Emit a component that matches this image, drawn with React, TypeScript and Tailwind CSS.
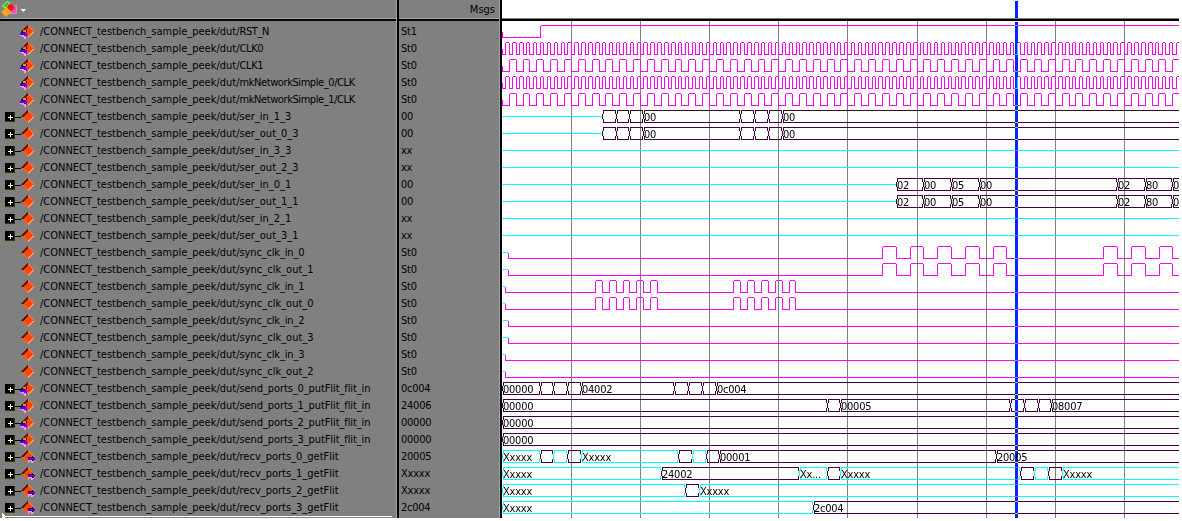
import React from "react";

type Kind = "in" | "out" | "net";
type Bus = { x: number; c: "k" | "c"; t?: string };
type Wave =
  | { type: "clock"; period: number }
  | { type: "reset" }
  | { type: "bit"; start: number; pulses: number[] }
  | { type: "bus"; lead?: boolean; segs: Bus[] };
type Signal = { name: string; value: string; kind: Kind; expand: boolean; wave: Wave };

const LEFT = 502;
const RIGHT = 1179;

const clock = (period: number): Wave => ({ type: "clock", period });
const bit = (start: number, pulses: number[] = []): Wave => ({ type: "bit", start, pulses });
const k = (x: number, t?: string): Bus => ({ x, c: "k", t });
const c = (x: number, t?: string): Bus => ({ x, c: "c", t });
const bus = (...segs: Bus[]): Wave => ({ type: "bus", segs });
const idle: Wave = { type: "bus", lead: true, segs: [] };

const ser1: Wave = {
  type: "bus",
  lead: true,
  segs: [k(602), k(616), k(629), k(643, "00"), k(740), k(754), k(768), k(782, "00")],
};
const ser0: Wave = {
  type: "bus",
  lead: true,
  segs: [k(896, "02"), k(923, "00"), k(951, "05"), k(979, "00"), k(1117, "02"), k(1145, "80"), k(1172, "0")],
};
const late = [882, 896, 910, 923, 937, 951, 965, 979, 993, 1006, 1103, 1117, 1131, 1145, 1159, 1172];
const early = [595, 602, 609, 616, 623, 629, 636, 643, 650, 657, 733, 740, 747, 754, 761, 768, 775, 782, 789, 795];

const sig = (name: string, value: string, kind: Kind, expand: boolean, wave: Wave): Signal => ({
  name, value, kind, expand, wave,
});

const signals: Signal[] = [
  sig("RST_N", "St1", "in", false, { type: "reset" }),
  sig("CLK0", "St0", "in", false, clock(6.912)),
  sig("CLK1", "St0", "in", false, clock(13.824)),
  sig("mkNetworkSimple_0/CLK", "St0", "in", false, clock(6.912)),
  sig("mkNetworkSimple_1/CLK", "St0", "in", false, clock(13.824)),
  sig("ser_in_1_3", "00", "net", true, ser1),
  sig("ser_out_0_3", "00", "net", true, ser1),
  sig("ser_in_3_3", "xx", "net", true, idle),
  sig("ser_out_2_3", "xx", "net", true, idle),
  sig("ser_in_0_1", "00", "net", true, ser0),
  sig("ser_out_1_1", "00", "net", true, ser0),
  sig("ser_in_2_1", "xx", "net", true, idle),
  sig("ser_out_3_1", "xx", "net", true, idle),
  sig("sync_clk_in_0", "St0", "net", false, bit(508, late)),
  sig("sync_clk_out_1", "St0", "net", false, bit(508, late)),
  sig("sync_clk_in_1", "St0", "net", false, bit(505, early)),
  sig("sync_clk_out_0", "St0", "net", false, bit(505, early)),
  sig("sync_clk_in_2", "St0", "net", false, bit(508)),
  sig("sync_clk_out_3", "St0", "net", false, bit(508)),
  sig("sync_clk_in_3", "St0", "net", false, bit(505)),
  sig("sync_clk_out_2", "St0", "net", false, bit(505)),
  sig("send_ports_0_putFlit_flit_in", "0c004", "in", true,
    bus(k(502, "00000"), k(540), k(553), k(567), k(581, "04002"), k(674), k(688), k(702), k(716, "0c004"))),
  sig("send_ports_1_putFlit_flit_in", "24006", "in", true,
    bus(k(502, "00000"), k(827), k(840, "00005"), k(1010), k(1024), k(1038), k(1051, "08007"))),
  sig("send_ports_2_putFlit_flit_in", "00000", "in", true, bus(k(502, "00000"))),
  sig("send_ports_3_putFlit_flit_in", "00000", "in", true, bus(k(502, "00000"))),
  sig("recv_ports_0_getFlit", "20005", "out", true,
    bus(c(502, "Xxxxx"), k(540), c(553), k(567), c(581, "Xxxxx"), k(678), c(692), k(706), k(719, "00001"), k(996, "20005"))),
  sig("recv_ports_1_getFlit", "Xxxxx", "out", true,
    bus(c(502, "Xxxxx"), k(661, "24002"), c(799, "Xx..."), k(827), c(840, "Xxxxx"), k(1020), c(1034), k(1048), c(1062, "Xxxxx"))),
  sig("recv_ports_2_getFlit", "Xxxxx", "out", true, bus(c(502, "Xxxxx"), k(685), c(699, "Xxxxx"))),
  sig("recv_ports_3_getFlit", "2c004", "out", true, bus(c(502, "Xxxxx"), k(813, "2c004"))),
];

const h = (x1: number, x2: number, y: number) => `M${x1} ${y}H${x2}V${y + 1}H${x1}Z`;
const v = (x: number, y1: number, y2: number) => `M${x} ${y1}H${x + 1}V${y2}H${x}Z`;

function pulsePath(from: number, pulses: number[], hi: number, lo: number) {
  let d = "";
  let x = from;
  for (let i = 0; i < pulses.length; i += 2) {
    const rise = pulses[i];
    const fall = Math.min(pulses[i + 1], RIGHT);
    d += h(x, rise + 1, lo) + v(rise, hi + 1, lo) + h(rise + 1, fall, hi);
    if (fall < RIGHT) d += v(fall, hi + 1, lo);
    x = fall;
  }
  return x < RIGHT ? d + h(x, RIGHT, lo) : d;
}

function clockEdges(period: number) {
  const edges: number[] = [];
  for (let n = -20; n < 100; n++) {
    const fall = 570.9 + n * period;
    const rise = Math.round(fall - period / 2);
    if (rise > LEFT && rise < RIGHT) edges.push(rise, Math.round(fall));
  }
  return edges;
}

function busPath(a: number, b: number, hi: number, lo: number) {
  let d = h(a + 1, b, hi) + h(a + 1, b, lo);
  d += v(a + 1, hi, hi + 4) + v(a, hi + 4, lo - 3) + v(a + 1, lo - 3, lo);
  if (b < RIGHT) d += v(b - 1, hi, hi + 4) + v(b, hi + 4, lo - 3) + v(b - 1, lo - 3, lo);
  return d;
}

const MAGENTA = "fill-[#ff00ff]";
const CYAN = "fill-[#00ffff]";
const DARK = "fill-[#400040]";

function Trace({ wave, row }: { wave: Wave; row: number }) {
  const hi = 25 + 17 * row;
  const mid = hi + 6;
  const lo = hi + 12;
  if (wave.type === "reset")
    return <path className={MAGENTA} d={v(LEFT, mid + 1, lo) + h(LEFT, 541, lo) + v(540, hi + 1, lo) + h(541, RIGHT, hi)} />;
  if (wave.type === "clock")
    return <path className={MAGENTA} d={v(LEFT, mid + 1, lo) + pulsePath(LEFT, clockEdges(wave.period), hi, lo)} />;
  if (wave.type === "bit")
    return (
      <g>
        <path className={CYAN} d={h(503, wave.start, mid)} />
        <path className={MAGENTA} d={v(wave.start, mid + 1, lo) + pulsePath(wave.start, wave.pulses, hi, lo)} />
      </g>
    );
  const { segs } = wave;
  return (
    <g>
      {wave.lead && <path className={CYAN} d={h(LEFT, segs.length ? segs[0].x : RIGHT, mid)} />}
      {segs.map((s, i) => (
        <path
          key={s.x}
          className={s.c === "k" ? DARK : CYAN}
          d={busPath(s.x, i + 1 < segs.length ? segs[i + 1].x : RIGHT, hi, lo)}
        />
      ))}
    </g>
  );
}

function SignalIcon({ kind }: { kind: Kind }) {
  return (
    <svg width="18" height="17" viewBox="0 0 18 17" className="shrink-0" shapeRendering="crispEdges">
      <path d="M9 1 1.5 8.5H5L9 4.5Z" fill="#5c1c0c" />
      <path d="M9 1 16 8.5H13L9 4.5Z" fill="#f07038" />
      <path d="M1.5 8.5 9 16V12.5L5 8.5Z" fill="#e86028" />
      <path d="M16 8.5 9 16V12.5L13 8.5Z" fill="#ff9a70" />
      <path d="M9 4 13.5 8.5 9 13 4.5 8.5Z" fill="#ff4408" />
      {kind === "in" && (
        <g transform="translate(1 0)">
          <path d="M2 7h5v2H6v2H1V9h1z" fill="#180828" />
          <path d="M3 7h3v2H3z" fill="#ff8030" />
          <path d="M0 10h6v3H0z" fill="#5000e0" />
          <path d="M5 9h1v1h1v4H6v1H4v-2h1z" fill="#6010f0" />
          <path d="M0 12h4v1H0zM2 13h4v1H2zM4 14h2v2H4z" fill="#ff90ff" />
        </g>
      )}
      {kind === "out" && (
        <g>
          <path d="M9 9h4V8h1v1h1v1h1v2h-1v1h-2v-1H9z" fill="#20082c" />
          <path d="M9 10h7v2H9z" fill="#5000e8" />
          <path d="M9 12h4v1H9zM12 13h3v1h-3zM12 14h2v1h-2zM15 12h1v1h-1z" fill="#ff98ff" />
        </g>
      )}
    </svg>
  );
}

function ExpandBox() {
  return (
    <svg width="16" height="17" viewBox="0 0 16 17" className="shrink-0" shapeRendering="crispEdges">
      <path d="M0 4h10v11H0z" fill="#8c7c5c" />
      <path d="M0 4h10v10H0z" fill="#000" />
      <path d="M0 13h10v1H0zM9 4h1v10H9z" fill="#3c3218" />
      <path d="M3 9h5v1H3zM5 7h1v5H5z" fill="#fff" />
      <path d="M10 9h6v1h-6z" fill="#000" />
    </svg>
  );
}

function ToolbarIcon() {
  return (
    <svg width="17" height="18" viewBox="0 0 17 18">
      <path d="M8.5 5.5h7v8h-7z" fill="#f050b8" stroke="#ff78c8" />
      <path d="M9 6h5v3H9z" fill="#a86858" />
      <path d="M1.5 6.5 6 1.5 9 3 4.5 8Z" fill="#20d010" stroke="#90ff70" />
      <circle cx="9.5" cy="7.5" r="3.2" fill="#ff1010" />
      <path d="M5.5 7 10.5 12 5 17 0 12Z" fill="#ffa820" />
    </svg>
  );
}

function nameTracking(name: string) {
  if (/CLK|RST/.test(name)) return "tracking-[-0.42px]";
  if (name.startsWith("sync_clk_in")) return "tracking-[-0.15px]";
  if (name.startsWith("send")) return "tracking-[-0.1px]";
  return "tracking-normal";
}

export default function App() {
  const grid = [571, 640, 709, 778, 847, 917, 986, 1055, 1124];
  return (
    <div className="h-[521px] w-[1182px] overflow-hidden bg-white">
      <div className="flex h-[518px] w-[1179px] whitespace-pre font-['DejaVu_Sans_Condensed','DejaVu_Sans',sans-serif] text-[11px] leading-[17px] text-black [font-stretch:condensed]">
        <div className="flex w-[399px] flex-col border-r-2 border-black bg-[#808080]">
          <div className="flex flex-1 flex-col border-r border-[#a0a0a0]">
            <div className="flex h-[21px] items-start border-b-2 border-black">
              <div className="flex h-[19px] w-full border-b border-[#a0a0a0] pl-px">
                <ToolbarIcon />
                <svg width="8" height="18" viewBox="0 0 8 18" className="ml-[2px]">
                  <path d="M.5 9h5.5L3.2 12Z" fill="#fff" />
                </svg>
              </div>
            </div>
            <div className="flex h-[495px] flex-col pt-[2px]">
              {signals.map((s) => (
                <div key={s.name} className="flex h-[17px] shrink-0 pl-[5px]">
                  {s.expand ? <ExpandBox /> : <span className="w-4" />}
                  <span className="-ml-[2px] flex">
                    <SignalIcon kind={s.kind} />
                  </span>
                  <span className="ml-[3px]">/CONNECT_testbench_sample_peek/dut/</span>
                  <span className={nameTracking(s.name)}>{s.name}</span>
                </div>
              ))}
            </div>
            <svg width="396" height="6" viewBox="0 0 396 6" className="-mt-[4px]" shapeRendering="crispEdges">
              <path d="M2 1h1v1h1v1h1v1h387v1H5v1H2z" fill="#fff" />
            </svg>
          </div>
        </div>
        <div className="flex w-[103px] flex-col border-r-2 border-black bg-[#808080]">
          <div className="flex flex-1 flex-col border-r border-[#a0a0a0]">
            <div className="h-[21px] border-b-2 border-black">
              <div className="h-[19px] border-b border-[#a0a0a0] pt-px pr-[4px] text-right">Msgs</div>
            </div>
            <div className="flex flex-col pt-[2px] pl-[2px] tracking-[-0.24px]">
              {signals.map((s) => (
                <div key={s.name} className="h-[17px]">{s.value}</div>
              ))}
            </div>
          </div>
        </div>
        <div className="flex w-[677px] flex-col">
          <div className="h-[21px] border-b-2 border-black">
            <div className="h-[19px] border-b border-[#808080] pt-px">
              <div className="ml-[513px] h-[17px] w-[3px] bg-[#0026ff]" />
            </div>
          </div>
          <svg width="677" height="497" viewBox="502 21 677 497" className="isolate block">
            <rect x="502" y="21" width="677" height="497" fill="#fff" />
            <g shapeRendering="crispEdges">
              {grid.map((x) => (
                <path key={x} d={v(x, 21, 518)} fill="#808080" />
              ))}
              {signals.map((s, i) => (
                <Trace key={s.name} wave={s.wave} row={i} />
              ))}
              <rect x="1015" y="22" width="3" height="496" fill="#ffd900" className="mix-blend-difference" />
            </g>
            {signals.map((s, i) =>
              s.wave.type === "bus"
                ? s.wave.segs
                    .filter((b) => b.t)
                    .map((b) => (
                      <text key={s.name + b.x} x={b.x + 1} y={36 + 17 * i} fill="#000" className="tracking-[-0.24px]">
                        {b.t}
                      </text>
                    ))
                : null,
            )}
          </svg>
        </div>
      </div>
    </div>
  );
}
